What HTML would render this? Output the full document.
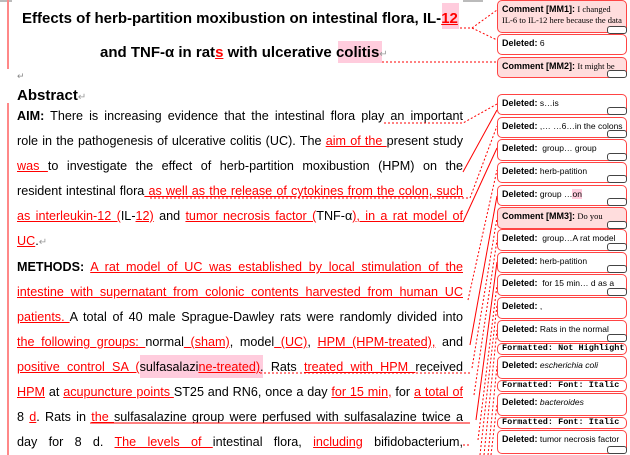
<!DOCTYPE html>
<html><head><meta charset="utf-8"><style>
*{margin:0;padding:0;box-sizing:border-box}
body{width:630px;height:455px;overflow:hidden;background:#fff;position:relative;font-family:"Liberation Sans",Arial,sans-serif;color:#000}
.l{position:absolute;left:17px;width:446px;font-size:12.6px;line-height:18px;text-align:justify;text-align-last:justify;height:18px;overflow:visible}
.r{color:#f00;text-decoration:underline;text-decoration-color:#f00}
.t{position:absolute;font-weight:bold;font-size:15px;line-height:22px;white-space:nowrap}
.b{position:absolute;left:497px;width:130px;border:1.5px solid #f44;border-radius:5px;background:#fff;font-size:8.5px;line-height:11px;padding:3px 3px 0 4px;white-space:nowrap;overflow:hidden}
.b b{font-weight:bold;font-size:9px}
.pk{background:#fdd}
.m{font-family:"Liberation Mono",monospace;font-size:8.5px;font-weight:bold;padding-top:0}
.sr{font-family:"Liberation Serif",serif}
.dots{position:absolute;left:607px;width:20px;height:8px;border:1.3px solid #444;border-radius:3px;background:#fff}
.bar{position:absolute;left:7px;width:2px;background:#f88}
</style></head><body>
<div style="position:absolute;left:0;top:0;width:12px;height:2px;background:#bbb"></div>
<div style="position:absolute;left:463px;top:0;width:20px;height:2px;background:#bbb"></div>
<div class="bar" style="top:0;height:69px"></div>
<div class="bar" style="top:103px;height:352px"></div>

<div style="position:absolute;left:442px;top:3px;width:17px;height:26px;background:#fcd"></div>
<div style="position:absolute;left:338px;top:41px;width:44px;height:22px;background:#fcd"></div>
<div style="position:absolute;left:140px;top:355px;width:123px;height:23px;background:#fcd"></div>

<div class="t" style="left:22px;top:8px">Effects of herb-partition moxibustion on intestinal flora, IL-<span class="r">12</span></div>
<div class="t" style="left:100px;top:42px">and TNF-α in rat<span class="r">s</span> with ulcerative colitis<span style="color:#999;font-weight:normal;font-size:10px">↵</span></div>
<div style="position:absolute;left:17px;top:71px;font-size:9px;color:#888">↵</div>
<div class="t" style="left:17px;top:85px;font-size:15px">Abstract<span style="color:#999;font-weight:normal;font-size:10px">↵</span></div>

<div class="l" style="top:107px"><b>AIM:</b> There is increasing evidence that the intestinal flora play an important</div>
<div class="l" style="top:132px">role in the pathogenesis of ulcerative colitis (UC). The <span class="r">aim of the </span>present study</div>
<div class="l" style="top:157px"><span class="r">was </span>to investigate the effect of herb-partition moxibustion (HPM) on the</div>
<div class="l" style="top:182px">resident intestinal flora<span class="r"> as well as the release of cytokines from the colon, such</span></div>
<div class="l" style="top:207px"><span class="r">as interleukin-12 (</span>IL-<span class="r">12)</span> and <span class="r">tumor necrosis factor (</span>TNF-α<span class="r">), in a rat model of</span></div>
<div class="l" style="top:232px;text-align-last:left"><span class="r">UC</span>.<span style="color:#999;font-size:10px">↵</span></div>
<div class="l" style="top:258px"><b>METHODS:</b> <span class="r">A rat model of UC was established by local stimulation of the</span></div>
<div class="l" style="top:283px"><span class="r">intestine with supernatant from colonic contents harvested from human UC</span></div>
<div class="l" style="top:308px"><span class="r">patients. </span>A total of 40 male Sprague-Dawley rats were randomly divided into</div>
<div class="l" style="top:333px"><span class="r">the following groups: </span>normal<span class="r"> (sham)</span>, model<span class="r"> (UC)</span>, <span class="r">HPM (HPM-treated),</span> and</div>
<div class="l" style="top:358px"><span class="r">positive control SA (</span>sulfasalazi<span class="r">ne-treated)</span>. Rats <span class="r">treated with HPM </span>received</div>
<div class="l" style="top:383px"><span class="r">HPM</span> at <span class="r">acupuncture points </span>ST25 and RN6, once a day <span class="r">for 15 min,</span> for <span class="r">a total of</span></div>
<div class="l" style="top:408px">8 <span class="r">d</span>. Rats in <span class="r">the </span>sulfasalazine group were perfused with sulfasalazine twice a</div>
<div class="l" style="top:433px">day for 8 d. <span class="r">The levels of </span>intestinal flora, <span class="r">including</span> bifidobacterium,</div>

<svg style="position:absolute;left:0;top:0" width="630" height="455">
<g stroke="#f00" stroke-width="1" fill="none">
<path d="M460 28H472L497 10M472 28L497 40" stroke-dasharray="2,2"/>
<path d="M382 62H497" stroke-dasharray="2,2"/>
<path d="M384 123H463L497 104" stroke-dasharray="2,2"/>
<path d="M463 172L497 110"/>
<path d="M150 198H470L497 126" stroke-dasharray="2,2"/>
<path d="M463 222L497 148"/>
<path d="M468 300L497 170" stroke-dasharray="2,2"/>
<path d="M470 345L497 196"/>
<path d="M472 368L497 218" stroke-dasharray="2,2"/>
<path d="M474 395L497 240" stroke-dasharray="2,2"/>
<path d="M476 420L497 262"/>
<path d="M478 440L497 285" stroke-dasharray="2,2"/>
<path d="M480 455L497 305" stroke-dasharray="2,2"/>
<path d="M484 455L497 330" stroke-dasharray="2,2"/>
<path d="M488 455L497 366" stroke-dasharray="2,2"/>
<path d="M491 455L497 404" stroke-dasharray="2,2"/>
<path d="M463 445L470 445" stroke-dasharray="2,2"/>
<path d="M260 373H470" stroke-dasharray="2,2"/>
<path d="M90 423H470"/>
</g></svg>

<div class="b pk" style="top:0;height:33px"><b>Comment [MM1]:</b> <span class="sr">I changed<br>IL-6 to IL-12 here because the data</span></div><div class="dots" style="top:26px"></div>
<div class="b" style="top:34px;height:21px"><b>Deleted:</b> 6</div>
<div class="b pk" style="top:57px;height:21px"><b>Comment [MM2]:</b> <span class="sr">It might be</span></div><div class="dots" style="top:70px"></div>
<div class="b" style="top:94px;height:21px"><b>Deleted:</b> s…is</div><div class="dots" style="top:107px"></div>
<div class="b" style="top:117px;height:21px"><b>Deleted:</b> ,… …6…in the colons</div><div class="dots" style="top:130px"></div>
<div class="b" style="top:139px;height:22px"><b>Deleted:</b> &nbsp;group… group</div><div class="dots" style="top:153px"></div>
<div class="b" style="top:162px;height:21px"><b>Deleted:</b> herb-patition</div><div class="dots" style="top:175px"></div>
<div class="b" style="top:185px;height:21px"><b>Deleted:</b> group …<span style="background:#fcd">on</span></div><div class="dots" style="top:198px"></div>
<div class="b pk" style="top:207px;height:22px"><b>Comment [MM3]:</b> <span class="sr">Do you</span></div><div class="dots" style="top:221px"></div>
<div class="b" style="top:229px;height:22px"><b>Deleted:</b> &nbsp;group…A rat model</div><div class="dots" style="top:243px"></div>
<div class="b" style="top:252px;height:21px"><b>Deleted:</b> herb-patition</div><div class="dots" style="top:265px"></div>
<div class="b" style="top:274px;height:22px"><b>Deleted:</b> &nbsp;for 15 min… d as a</div><div class="dots" style="top:288px"></div>
<div class="b" style="top:297px;height:22px"><b>Deleted:</b> ,</div>
<div class="b" style="top:320px;height:22px"><b>Deleted:</b> Rats in the normal</div><div class="dots" style="top:334px"></div>
<div class="b m" style="top:343px;height:12px;line-height:9px">Formatted: Not Highlight</div>
<div class="b" style="top:356px;height:23px"><b>Deleted:</b> <i>escherichia coli</i></div>
<div class="b m" style="top:380px;height:12px;line-height:9px">Formatted: Font: Italic</div>
<div class="b" style="top:393px;height:23px"><b>Deleted:</b> <i>bacteroides</i></div>
<div class="b m" style="top:417px;height:12px;line-height:9px">Formatted: Font: Italic</div>
<div class="b" style="top:430px;height:24px"><b>Deleted:</b> tumor necrosis factor</div><div class="dots" style="top:446px"></div>
</body></html>
